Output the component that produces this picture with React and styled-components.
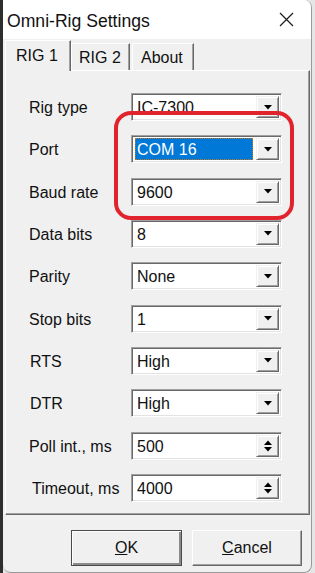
import React from 'react';
import styled, { createGlobalStyle } from 'styled-components';

const Global = createGlobalStyle`
  html, body {
    margin: 0;
    padding: 0;
    height: 573px;
    overflow: hidden;
  }
  body {
    background: linear-gradient(to right, #2d2f2e 0, #2d2f2e 3px, #e6e6e6 3px);
    font-family: "Liberation Sans", Arial, sans-serif;
  }
`;

const Window = styled.div`
  margin-left: 3px;
  width: 309px;
  height: 573px;
  box-sizing: border-box;
  display: flex;
  flex-direction: column;
  background: #f0f0f0;
  border-right: 1px solid #9a9a9a;
  border-bottom: 1px solid #9a9a9a;
  border-radius: 0 8px 8px 8px;
  overflow: hidden;
  position: relative;
`;

const TitleBar = styled.div`
  height: 39px;
  flex: none;
  background: #fff;
  display: flex;
  align-items: center;
  justify-content: space-between;
  padding: 0 17px 0 4px;
`;

const Title = styled.span`
  font-size: 17.6px;
  color: #111;
  padding-top: 4px;
`;

const Body = styled.div`
  flex: 1;
  display: flex;
  flex-direction: column;
  padding: 1px 1px 0 2px;
`;

const TabStrip = styled.div`
  height: 30px;
  display: flex;
  align-items: flex-end;
  position: relative;
  z-index: 1;
`;

const Tab = styled.div`
  box-sizing: border-box;
  height: ${p => (p.active ? 31 : 27)}px;
  width: ${p => p.w}px;
  margin-bottom: ${p => (p.active ? -1 : 0)}px;
  margin-right: ${p => (p.active ? 0 : 2)}px;
  padding-left: ${p => p.pl}px;
  padding-top: ${p => (p.active ? 6 : 5)}px;
  background: #f0f0f0;
  border-top: 1px solid #fff;
  border-left: 1px solid #fff;
  border-right: 1px solid #696969;
  box-shadow: inset -1px 0 #a0a0a0;
  font-size: 16px;
  color: #111;
`;

const Panel = styled.div`
  height: 445px;
  box-sizing: border-box;
  border: 1px solid;
  border-color: #fff #696969 #696969 #fff;
  box-shadow: inset -1px -1px #a0a0a0;
  display: grid;
  grid-template-columns: 102px 151px;
  grid-auto-rows: 28px;
  row-gap: 14.33px;
  align-items: center;
  padding: 22px 0 0 23px;
  position: relative;
`;

const Label = styled.div`
  font-size: 16px;
  color: #111;
  padding-left: ${p => p.pl || 0}px;
  padding-top: 2px;
`;

const Field = styled.div`
  height: 28px;
  box-sizing: border-box;
  background: #fff;
  border: 1px solid;
  border-color: #a0a0a0 #fff #fff #a0a0a0;
  box-shadow: inset 1px 1px #696969, inset -1px -1px #e3e3e3;
  display: flex;
  align-items: center;
  padding: 2px 2px 2px 3px;
`;

const Value = styled.div`
  flex: 1;
  height: 22px;
  line-height: 23px;
  box-sizing: border-box;
  font-size: 16px;
  padding-left: 2px;
  color: ${p => (p.selected ? '#fff' : '#111')};
  background: ${p => (p.selected ? '#0078d7' : 'transparent')};
  outline: ${p => (p.selected ? '1px dotted #c2771f' : 'none')};
  outline-offset: -1px;
  margin-right: 3px;
`;

const DropButton = styled.div`
  width: 23px;
  height: 22px;
  box-sizing: border-box;
  background: #f0f0f0;
  border: 1px solid;
  border-color: #f0f0f0 #696969 #696969 #f0f0f0;
  box-shadow: inset 1px 1px #fff, inset -1px -1px #a0a0a0;
  display: flex;
  flex-direction: column;
  align-items: center;
  justify-content: center;
  gap: 2px;
`;

const ButtonRow = styled.div`
  display: flex;
  justify-content: flex-end;
  gap: 10px;
  padding: 15px 8px 0 0;
`;

const Button = styled.div`
  width: ${p => p.w}px;
  height: 36px;
  box-sizing: border-box;
  background: #f0f0f0;
  border: 1px solid;
  border-color: ${p => (p.primary ? '#4a4a4a' : '#fff #696969 #696969 #fff')};
  box-shadow: ${p =>
    p.primary
      ? 'inset 1px 1px #fff, inset -2px -2px #8a8a8a'
      : 'inset -1px -1px #a0a0a0'};
  display: flex;
  align-items: center;
  justify-content: center;
  font-size: 16px;
  color: #111;
`;

const Highlight = styled.div`
  position: absolute;
  left: 108px;
  top: 40px;
  width: 180px;
  height: 109px;
  box-sizing: border-box;
  border: 4px solid #e0232c;
  border-radius: 17px;
  pointer-events: none;
`;

const Close = () => (
  <svg width="15" height="15" viewBox="0 0 15 15">
    <path d="M1 1 L14 14 M14 1 L1 14" stroke="#1a1a1a" strokeWidth="1.2" />
  </svg>
);

const Down = () => (
  <svg width="8" height="5" viewBox="0 0 8 5">
    <path d="M0 0 H8 L4 4.5 Z" fill="#000" />
  </svg>
);

const Up = () => (
  <svg width="8" height="5" viewBox="0 0 8 5">
    <path d="M0 5 H8 L4 0.5 Z" fill="#000" />
  </svg>
);

const rows = [
  { label: 'Rig type', value: 'IC-7300' },
  { label: 'Port', value: 'COM 16', selected: true },
  { label: 'Baud rate', value: '9600' },
  { label: 'Data bits', value: '8' },
  { label: 'Parity', value: 'None' },
  { label: 'Stop bits', value: '1' },
  { label: 'RTS', value: 'High', pl: 1 },
  { label: 'DTR', value: 'High', pl: 1 },
  { label: 'Poll int., ms', value: '500', spin: true },
  { label: 'Timeout, ms', value: '4000', spin: true, pl: 3 },
];

export default function App() {
  return (
    <>
      <Global />
      <Window>
        <TitleBar>
          <Title>Omni-Rig Settings</Title>
          <Close />
        </TitleBar>
        <Body>
          <TabStrip>
            <Tab active w={66} pl={10}>RIG 1</Tab>
            <Tab w={59} pl={7}>RIG 2</Tab>
            <Tab w={62} pl={8}>About</Tab>
          </TabStrip>
          <Panel>
            {rows.map(r => (
              <React.Fragment key={r.label}>
                <Label pl={r.pl}>{r.label}</Label>
                <Field>
                  <Value selected={r.selected}>{r.value}</Value>
                  <DropButton>
                    {r.spin ? (
                      <>
                        <Up />
                        <Down />
                      </>
                    ) : (
                      <Down />
                    )}
                  </DropButton>
                </Field>
              </React.Fragment>
            ))}
            <Highlight />
          </Panel>
          <ButtonRow>
            <Button primary w={111}>
              <span><u>O</u>K</span>
            </Button>
            <Button w={110}>
              <span><u>C</u>ancel</span>
            </Button>
          </ButtonRow>
        </Body>
      </Window>
    </>
  );
}
